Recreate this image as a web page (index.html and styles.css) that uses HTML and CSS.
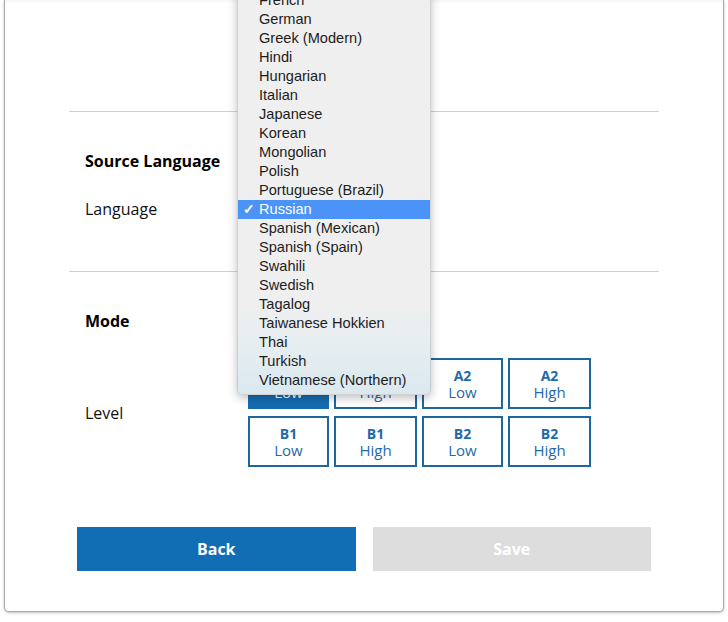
FILE: index.html
```html
<!DOCTYPE html>
<html lang="en">
<head>
<meta charset="utf-8">
<title>Settings</title>
<link rel="stylesheet" href="styles.css">
</head>
<body>
<div class="panel">
  <div class="content">
    <div class="top-space"></div>
    <section class="section source">
      <h2 class="heading">Source Language</h2>
      <div class="row">
        <span class="label">Language</span>
        <div class="select">Russian</div>
      </div>
    </section>
    <section class="section mode">
      <h2 class="heading">Mode</h2>
      <div class="row level-row">
        <span class="label">Level</span>
        <div class="levels">
          <button class="lvl active"><b>A1</b><span>Low</span></button>
          <button class="lvl"><b>A1</b><span>High</span></button>
          <button class="lvl"><b>A2</b><span>Low</span></button>
          <button class="lvl"><b>A2</b><span>High</span></button>
          <button class="lvl"><b>B1</b><span>Low</span></button>
          <button class="lvl"><b>B1</b><span>High</span></button>
          <button class="lvl"><b>B2</b><span>Low</span></button>
          <button class="lvl"><b>B2</b><span>High</span></button>
        </div>
      </div>
    </section>
    <div class="actions">
      <button class="btn back">Back</button>
      <button class="btn save" disabled>Save</button>
    </div>
  </div>
  <ul class="menu">
    <li>French</li>
    <li>German</li>
    <li>Greek (Modern)</li>
    <li>Hindi</li>
    <li>Hungarian</li>
    <li>Italian</li>
    <li>Japanese</li>
    <li>Korean</li>
    <li>Mongolian</li>
    <li>Polish</li>
    <li>Portuguese (Brazil)</li>
    <li class="sel"><span class="check">✓</span>Russian</li>
    <li>Spanish (Mexican)</li>
    <li>Spanish (Spain)</li>
    <li>Swahili</li>
    <li>Swedish</li>
    <li>Tagalog</li>
    <li>Taiwanese Hokkien</li>
    <li>Thai</li>
    <li>Turkish</li>
    <li>Vietnamese (Northern)</li>
  </ul>
</div>
</body>
</html>
```
FILE: styles.css
```css
* { box-sizing: border-box; }
html, body { margin: 0; padding: 0; background: #fff; }
body { font-family: "Open Sans", "Liberation Sans", sans-serif; color: #111; overflow: hidden; height: 622px; }

.panel {
  position: relative;
  margin-left: 4px;
  width: 720px;
  height: 612px;
  background: #fff;
  border: 1px solid #a9a9a9;
  border-top: none;
  border-radius: 0 0 5px 5px;
  box-shadow: 0 1px 3px rgba(0,0,0,0.25), inset 0 4px 3px -2px rgba(0,0,0,0.04);
}

.content { padding: 0 64px 0 64px; }
.top-space { height: 111px; }

.section { border-top: 1px solid #cfcfcf; }
.source { padding: 38px 0 51px; }
.mode { padding: 38px 0 0; }

.heading {
  margin: 0;
  padding-left: 16px;
  font-size: 16px;
  line-height: 22px;
  font-weight: 700;
  color: #000;
}

.row {
  display: flex;
  align-items: center;
  margin-top: 26px;
  padding-left: 16px;
}
.label { width: 163px; font-size: 16px; line-height: 22px; color: #111; }
.select { font-size: 14px; line-height: 22px; color: #222; }

.level-row { margin-top: 26px; }
.levels {
  display: grid;
  grid-template-columns: 81px 83px 81px 83px;
  grid-auto-rows: 51px;
  column-gap: 5px;
  row-gap: 7px;
}
.lvl {
  display: flex;
  flex-direction: column;
  align-items: center;
  justify-content: center;
  border: 2px solid #1d67a0;
  background: #fff;
  color: #1f6aa8;
  font-family: "Open Sans", sans-serif;
  padding: 0;
}
.lvl b { font-size: 14px; line-height: 17px; font-weight: 700; }
.lvl span { font-size: 15px; line-height: 17px; }
.lvl.active { background: #156bb0; border-color: #156bb0; color: #fff; }

.actions {
  display: flex;
  gap: 17px;
  padding: 0 8px;
  margin-top: 60px;
}
.btn {
  flex: 1;
  height: 44px;
  border: none;
  font-family: "Open Sans", sans-serif;
  font-size: 16px;
  font-weight: 700;
  color: #fff;
}
.back { background: #116db4; }
.save { background: #dddddd; color: #fff; }

.menu {
  position: absolute;
  left: 232px;
  top: -14px;
  width: 194px;
  margin: 0;
  padding: 4px 0;
  list-style: none;
  background: linear-gradient(to bottom, #efefef 0%, #efefef 78%, #e4edf1 90%, #dbe8ef 100%);
  border-radius: 5px;
  border: 1px solid rgba(0,0,0,0.12);
  box-shadow: 0 3px 10px rgba(0,0,0,0.25);
  font-family: "Liberation Sans", Arial, sans-serif;
  font-size: 14.6px;
  color: #1c1c1c;
}
.menu li {
  position: relative;
  height: 19px;
  line-height: 19px;
  padding-left: 21px;
  white-space: nowrap;
}
.menu li.sel { background: #4c93f7; color: #fff; }
.check { position: absolute; left: 5px; top: 0; font-size: 14px; font-weight: 700; }
```
